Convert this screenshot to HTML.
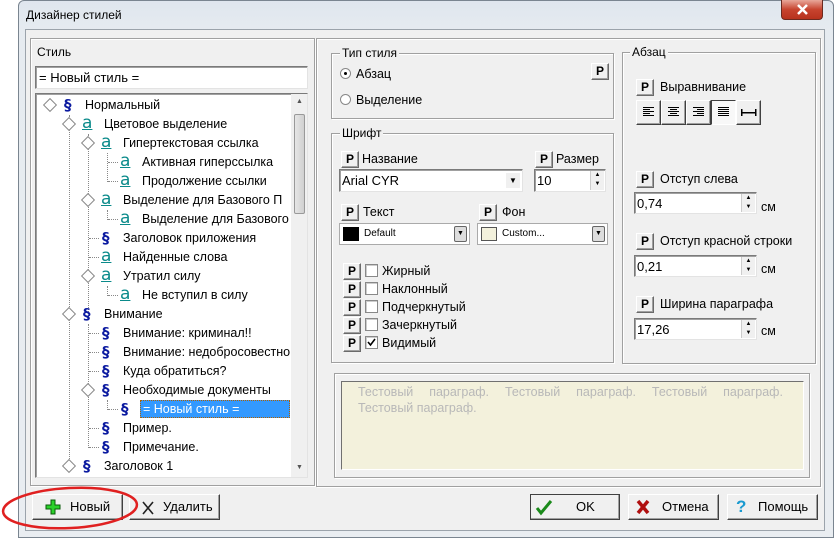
<!DOCTYPE html>
<html><head><meta charset="utf-8"><style>
*{box-sizing:border-box;margin:0;padding:0}
body{width:834px;height:538px;overflow:hidden;background:#fff;font-family:"Liberation Sans",sans-serif;font-size:12px;color:#000;position:relative}
.a{position:absolute}
.frame{left:18px;top:0;width:816px;height:538px;background:linear-gradient(#dfe6ee,#e6ebf0 30px,#e9edf1);border:1px solid #7a8590;border-radius:6px 6px 0 0}
.client{left:25px;top:29px;width:800px;height:502px;background:#f0f0f0;border:1px solid #9ba3ab}
.grp{border:1px solid #a0a0a0;box-shadow:inset 1px 1px 0 #fff,1px 1px 0 #fff}
.lbl{background:#f0f0f0;padding:0 2px;white-space:nowrap}
.edit{background:#fff;border:1px solid #7a7a7a;border-right-color:#e3e3e3;border-bottom-color:#e3e3e3;box-shadow:inset 1px 1px 0 #a0a0a0}
.pb{width:18px;height:17px;background:#f0f0f0;border:1px solid;border-color:#fff #6a6a6a #6a6a6a #fff;font-weight:bold;font-size:12px;text-align:center;line-height:15px;box-shadow:inset -1px -1px 0 #a0a0a0}
.btn{background:#f0f0f0;border:1px solid;border-color:#fff #404040 #404040 #fff;box-shadow:inset -1px -1px 0 #a0a0a0;height:26px;line-height:24px;font-size:13px}
.t{white-space:nowrap;font-size:12.5px}
.dia{width:10px;height:10px;border:1px solid #888;transform:rotate(45deg);background:#fff}
.sec{color:#0b1aa0;font-weight:bold;font-size:15px;font-family:"DejaVu Sans",sans-serif;line-height:18px}
.aa{color:#0a8a8a;font-size:17px;text-decoration:underline;font-family:"DejaVu Sans",sans-serif;line-height:16px}
.vd{border-left:1px dotted #888;width:1px}
.hd{border-top:1px dotted #888;height:1px}
.spin{width:14px;background:#f0f0f0;border-left:1px solid #ccc}
.cb{width:13px;height:13px;border:1px solid #888;background:#fff;box-shadow:inset 1px 1px 0 #ccc}
.al{width:25px;height:25px}
svg.c path{shape-rendering:crispEdges}
</style></head><body>
<div class="a frame"></div>
<div class="a" style="left:26px;top:8px;font-size:12px">Дизайнер стилей</div>
<div class="a" style="left:781px;top:0;width:42px;height:20px;background:linear-gradient(#e8a79a,#c7442f 50%,#b8321d);border:1px solid #6b2a20;border-top:none;border-radius:0 0 4px 4px"><svg width="42" height="19"><path d="M16 5L25 14M25 5L16 14" stroke="#fff" stroke-width="2.5"/></svg></div>
<div class="a client"></div>

<div class="a grp" style="left:30px;top:38px;width:285px;height:448px"></div>
<div class="a" style="left:37px;top:45px">Стиль</div>
<div class="a edit" style="left:35px;top:66px;width:273px;height:23px;padding:3px 3px;font-size:13px">= Новый стиль =</div>
<div class="a edit" style="left:35px;top:93px;width:273px;height:385px;overflow:hidden">
 <div class="a" style="left:255px;top:0;width:16px;height:383px;background:#f0f0f0"></div>
 <div class="a" style="left:258px;top:20px;width:11px;height:100px;background:linear-gradient(90deg,#e6e6e6,#d0d0d0);border:1px solid #999;border-radius:2px"></div>
 <div class="a" style="left:260px;top:4px;font-size:7px;color:#555">▲</div>
 <div class="a" style="left:260px;top:370px;font-size:7px;color:#555">▼</div>
</div>
<div class="a vd" style="left:69px;top:115px;height:352px"></div>
<div class="a vd" style="left:88px;top:134px;height:180px"></div>
<div class="a vd" style="left:88px;top:324px;height:124px"></div>
<div class="a vd" style="left:107px;top:153px;height:29px"></div>
<div class="a vd" style="left:107px;top:210px;height:10px"></div>
<div class="a vd" style="left:107px;top:286px;height:10px"></div>
<div class="a vd" style="left:107px;top:400px;height:10px"></div>
<div class="a" style="left:0;top:0;font-size:0">
<div class="a hd" style="left:108px;top:162px;width:10px"></div>
<div class="a hd" style="left:108px;top:181px;width:10px"></div>
<div class="a hd" style="left:108px;top:219px;width:10px"></div>
<div class="a hd" style="left:108px;top:295px;width:10px"></div>
<div class="a hd" style="left:108px;top:409px;width:10px"></div>
<div class="a hd" style="left:89px;top:238px;width:10px"></div>
<div class="a hd" style="left:89px;top:257px;width:10px"></div>
<div class="a hd" style="left:89px;top:333px;width:10px"></div>
<div class="a hd" style="left:89px;top:352px;width:10px"></div>
<div class="a hd" style="left:89px;top:371px;width:10px"></div>
<div class="a hd" style="left:89px;top:428px;width:10px"></div>
<div class="a hd" style="left:89px;top:447px;width:10px"></div>
</div>
<div class="a dia" style="left:45px;top:100px"></div>
<div class="a dia" style="left:64px;top:119px"></div>
<div class="a dia" style="left:83px;top:138px"></div>
<div class="a dia" style="left:83px;top:195px"></div>
<div class="a dia" style="left:83px;top:271px"></div>
<div class="a dia" style="left:64px;top:309px"></div>
<div class="a dia" style="left:83px;top:385px"></div>
<div class="a dia" style="left:64px;top:461px"></div>
<div class="a sec" style="left:64px;top:96px">§</div>
<div class="a aa" style="left:82px;top:115px">a</div>
<div class="a aa" style="left:101px;top:134px">a</div>
<div class="a aa" style="left:120px;top:153px">a</div>
<div class="a aa" style="left:120px;top:172px">a</div>
<div class="a aa" style="left:101px;top:191px">a</div>
<div class="a aa" style="left:120px;top:210px">a</div>
<div class="a sec" style="left:102px;top:229px">§</div>
<div class="a aa" style="left:101px;top:248px">a</div>
<div class="a aa" style="left:101px;top:267px">a</div>
<div class="a aa" style="left:120px;top:286px">a</div>
<div class="a sec" style="left:83px;top:305px">§</div>
<div class="a sec" style="left:102px;top:324px">§</div>
<div class="a sec" style="left:102px;top:343px">§</div>
<div class="a sec" style="left:102px;top:362px">§</div>
<div class="a sec" style="left:102px;top:381px">§</div>
<div class="a sec" style="left:121px;top:400px">§</div>
<div class="a sec" style="left:102px;top:419px">§</div>
<div class="a sec" style="left:102px;top:438px">§</div>
<div class="a sec" style="left:83px;top:457px">§</div>
<div class="a t" style="left:85px;top:98px">Нормальный</div>
<div class="a t" style="left:104px;top:117px">Цветовое выделение</div>
<div class="a t" style="left:123px;top:136px">Гипертекстовая ссылка</div>
<div class="a t" style="left:142px;top:155px">Активная гиперссылка</div>
<div class="a t" style="left:142px;top:174px">Продолжение ссылки</div>
<div class="a t" style="left:123px;top:193px;width:167px;overflow:hidden">Выделение для Базового П</div>
<div class="a t" style="left:142px;top:212px;width:148px;overflow:hidden">Выделение для Базового</div>
<div class="a t" style="left:123px;top:231px">Заголовок приложения</div>
<div class="a t" style="left:123px;top:250px">Найденные слова</div>
<div class="a t" style="left:123px;top:269px">Утратил силу</div>
<div class="a t" style="left:142px;top:288px">Не вступил в силу</div>
<div class="a t" style="left:104px;top:307px">Внимание</div>
<div class="a t" style="left:123px;top:326px">Внимание: криминал!!</div>
<div class="a t" style="left:123px;top:345px;width:167px;overflow:hidden">Внимание: недобросовестно</div>
<div class="a t" style="left:123px;top:364px">Куда обратиться?</div>
<div class="a t" style="left:123px;top:383px">Необходимые документы</div>
<div class="a t" style="left:140px;top:400px;width:150px;height:18px;background:#3399ff;color:#fff;padding:1px 2px;border:1px dotted #b06000">= Новый стиль =</div>
<div class="a t" style="left:123px;top:421px">Пример.</div>
<div class="a t" style="left:123px;top:440px">Примечание.</div>
<div class="a t" style="left:104px;top:459px">Заголовок 1</div>

<div class="a grp" style="left:316px;top:38px;width:505px;height:449px"></div>
<div class="a grp" style="left:331px;top:53px;width:283px;height:66px"></div>
<div class="a lbl" style="left:340px;top:46px">Тип стиля</div>
<div class="a" style="left:340px;top:68px;width:11px;height:11px;border-radius:50%;border:1px solid #888;background:#fff"><div class="a" style="left:3px;top:3px;width:3px;height:3px;border-radius:50%;background:#000"></div></div>
<div class="a t" style="left:356px;top:67px">Абзац</div>
<div class="a" style="left:340px;top:94px;width:11px;height:11px;border-radius:50%;border:1px solid #888;background:#fff"></div>
<div class="a t" style="left:356px;top:93px">Выделение</div>
<div class="a pb" style="left:591px;top:63px">P</div>

<div class="a grp" style="left:331px;top:133px;width:283px;height:230px"></div>
<div class="a lbl" style="left:340px;top:126px">Шрифт</div>
<div class="a pb" style="left:341px;top:151px">P</div>
<div class="a t" style="left:362px;top:152px">Название</div>
<div class="a edit" style="left:339px;top:169px;width:184px;height:23px;padding:3px 2px;font-size:13px">Arial CYR<div class="a" style="right:2px;top:3px;width:14px;height:15px;background:#f0f0f0;font-size:8px;text-align:center;line-height:15px">▼</div></div>
<div class="a pb" style="left:535px;top:151px">P</div>
<div class="a t" style="left:556px;top:152px">Размер</div>
<div class="a edit" style="left:534px;top:169px;width:72px;height:23px;padding:3px 2px;font-size:13px">10<div class="a spin" style="right:1px;top:1px;height:19px;font-size:6px;text-align:center;line-height:9px">▲<br>▼</div></div>
<div class="a pb" style="left:341px;top:204px">P</div>
<div class="a t" style="left:363px;top:205px">Текст</div>
<div class="a" style="left:339px;top:223px;width:131px;height:22px;background:#fff;border:1px solid #aaa"><div class="a" style="left:3px;top:3px;width:16px;height:14px;background:#000"></div><div class="a" style="left:24px;top:4px;font-size:10px">Default</div><div class="a" style="right:2px;top:2px;width:13px;height:16px;border:1px solid #666;border-radius:2px;background:#ddd;font-size:7px;text-align:center;line-height:14px">▼</div></div>
<div class="a pb" style="left:479px;top:204px">P</div>
<div class="a t" style="left:502px;top:205px">Фон</div>
<div class="a" style="left:477px;top:223px;width:131px;height:22px;background:#fff;border:1px solid #aaa"><div class="a" style="left:3px;top:3px;width:16px;height:14px;background:#f3f1dc;border:1px solid #555"></div><div class="a" style="left:24px;top:4px;font-size:10px">Custom...</div><div class="a" style="right:2px;top:2px;width:13px;height:16px;border:1px solid #666;border-radius:2px;background:#ddd;font-size:7px;text-align:center;line-height:14px">▼</div></div>
<div class="a pb" style="left:343px;top:263px">P</div><div class="a cb" style="left:365px;top:264px"></div><div class="a t" style="left:382px;top:264px">Жирный</div>
<div class="a pb" style="left:343px;top:281px">P</div><div class="a cb" style="left:365px;top:282px"></div><div class="a t" style="left:382px;top:282px">Наклонный</div>
<div class="a pb" style="left:343px;top:299px">P</div><div class="a cb" style="left:365px;top:300px"></div><div class="a t" style="left:382px;top:300px">Подчеркнутый</div>
<div class="a pb" style="left:343px;top:317px">P</div><div class="a cb" style="left:365px;top:318px"></div><div class="a t" style="left:382px;top:318px">Зачеркнутый</div>
<div class="a pb" style="left:343px;top:335px">P</div><div class="a cb" style="left:365px;top:336px"><svg width="11" height="11" class="a" style="left:0;top:0"><path d="M2 5L4.5 8L9 2" stroke="#000" stroke-width="1.6" fill="none"/></svg></div><div class="a t" style="left:382px;top:336px">Видимый</div>

<div class="a grp" style="left:622px;top:52px;width:194px;height:312px"></div>
<div class="a lbl" style="left:630px;top:45px">Абзац</div>
<div class="a pb" style="left:636px;top:79px">P</div>
<div class="a t" style="left:660px;top:80px">Выравнивание</div>
<div class="a" style="left:636px;top:100px;width:125px;height:25px">
 <div class="a btn al" style="left:0;top:0"><svg class="c" width="23" height="23"><path d="M6 6.5h11M6 8.5h7M6 10.5h11M6 12.5h7M6 14.5h11" stroke="#000"/></svg></div>
 <div class="a btn al" style="left:25px;top:0"><svg class="c" width="23" height="23"><path d="M6 6.5h11M8 8.5h7M6 10.5h11M8 12.5h7M6 14.5h11" stroke="#000"/></svg></div>
 <div class="a btn al" style="left:50px;top:0"><svg class="c" width="23" height="23"><path d="M6 6.5h11M10 8.5h7M6 10.5h11M10 12.5h7M6 14.5h11" stroke="#000"/></svg></div>
 <div class="a al" style="left:75px;top:0;border:1px solid;border-color:#404040 #fff #fff #404040;background:#f8f8f8"><svg class="c" width="23" height="23"><path d="M6 6.5h11M6 8.5h11M6 10.5h11M6 12.5h11M6 14.5h11" stroke="#000"/></svg></div>
 <div class="a btn al" style="left:100px;top:0"><svg class="c" width="23" height="23"><path d="M4 11.5h15M4.5 8v7M18.5 8v7" stroke="#000" stroke-width="1.5"/></svg></div>
</div>
<div class="a pb" style="left:636px;top:171px">P</div><div class="a t" style="left:660px;top:172px">Отступ слева</div>
<div class="a edit" style="left:634px;top:192px;width:123px;height:22px;padding:3px 2px;font-size:13px">0,74<div class="a spin" style="right:1px;top:1px;height:18px;font-size:6px;text-align:center;line-height:9px">▲<br>▼</div></div>
<div class="a t" style="left:761px;top:200px">см</div>
<div class="a pb" style="left:636px;top:233px">P</div><div class="a t" style="left:660px;top:234px">Отступ красной строки</div>
<div class="a edit" style="left:634px;top:255px;width:123px;height:22px;padding:3px 2px;font-size:13px">0,21<div class="a spin" style="right:1px;top:1px;height:18px;font-size:6px;text-align:center;line-height:9px">▲<br>▼</div></div>
<div class="a t" style="left:761px;top:262px">см</div>
<div class="a pb" style="left:636px;top:296px">P</div><div class="a t" style="left:660px;top:297px">Ширина параграфа</div>
<div class="a edit" style="left:634px;top:318px;width:123px;height:22px;padding:3px 2px;font-size:13px">17,26<div class="a spin" style="right:1px;top:1px;height:18px;font-size:6px;text-align:center;line-height:9px">▲<br>▼</div></div>
<div class="a t" style="left:761px;top:324px">см</div>

<div class="a grp" style="left:334px;top:373px;width:476px;height:105px"></div>
<div class="a" style="left:341px;top:381px;width:463px;height:89px;background:#f3f1dc;border:1px solid;border-color:#707070 #fff #fff #707070;color:#b8b8b8;font-size:12.5px;padding:2px 20px 0 16px;line-height:16px">
<div style="display:flex;justify-content:space-between"><span>Тестовый</span><span>параграф.</span><span>Тестовый</span><span>параграф.</span><span>Тестовый</span><span>параграф.</span></div>
<div>Тестовый параграф.</div></div>

<div class="a btn" style="left:32px;top:494px;width:91px"><svg class="a" style="left:12px;top:4px" width="16" height="16"><path d="M6 1h4v5h5v4h-5v5h-4v-5h-5v-4h5z" fill="#2bd12b" stroke="#0a5a0a"/></svg><span class="a" style="left:37px">Новый</span></div>
<div class="a btn" style="left:129px;top:494px;width:91px"><svg class="a" style="left:10px;top:5px" width="16" height="16"><path d="M3 2L13 14M13 2L3 14" stroke="#222" stroke-width="1.6"/></svg><span class="a" style="left:33px">Удалить</span></div>
<div class="a btn" style="left:530px;top:494px;width:90px;border-color:#404040"><svg class="a" style="left:4px;top:4px" width="18" height="17"><path d="M2 9L6 14L16 2" stroke="#1a8a1a" stroke-width="3" fill="none"/></svg><span class="a" style="left:45px">OK</span></div>
<div class="a btn" style="left:628px;top:494px;width:91px"><svg class="a" style="left:6px;top:4px" width="16" height="16"><path d="M3 2L13 14M13 2L3 14" stroke="#b01010" stroke-width="3.5"/></svg><span class="a" style="left:33px">Отмена</span></div>
<div class="a btn" style="left:727px;top:494px;width:91px"><span class="a" style="left:8px;color:#1a9ad0;font-size:17px;font-weight:bold">?</span><span class="a" style="left:30px">Помощь</span></div>
<svg class="a" style="left:0;top:480px" width="150" height="58"><ellipse cx="70" cy="28" rx="67" ry="20" fill="none" stroke="#e02020" stroke-width="2.5" transform="rotate(-3 70 28)"/></svg>
</body></html>
